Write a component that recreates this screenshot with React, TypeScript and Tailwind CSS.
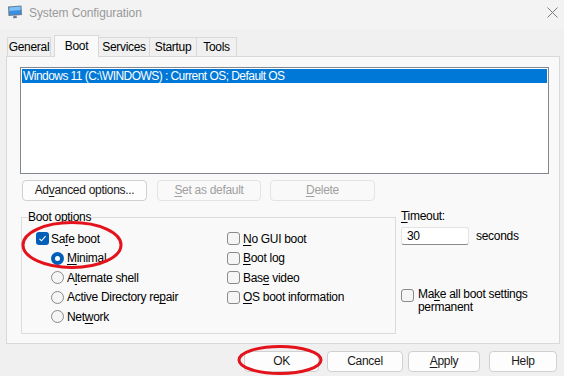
import React from "react";

const U = ({ children }: { children: React.ReactNode }) => (
  <span className="underline decoration-1 underline-offset-[2px]">{children}</span>
);

const Check = ({ checked = false }: { checked?: boolean }) =>
  checked ? (
    <span className="w-[13px] h-[13px] shrink-0 rounded-[3px] bg-[#005fb8] flex items-center justify-center">
      <svg width="9" height="9" viewBox="0 0 9 9">
        <path d="M1.5 4.8 L3.5 6.8 L7.6 2.2" fill="none" stroke="#fff" strokeWidth="1.1" />
      </svg>
    </span>
  ) : (
    <span className="block w-[13px] h-[13px] shrink-0 rounded-[3px] border border-[#8a8a8a] bg-[#f5f5f5]" />
  );

const Radio = ({ checked = false }: { checked?: boolean }) =>
  checked ? (
    <span className="w-[13px] h-[13px] shrink-0 rounded-full bg-[#005fb8] flex items-center justify-center">
      <span className="w-[5px] h-[5px] rounded-full bg-white" />
    </span>
  ) : (
    <span className="block w-[13px] h-[13px] shrink-0 rounded-full border border-[#8a8a8a] bg-[#f5f5f5]" />
  );

const Btn = ({
  w,
  disabled = false,
  children,
}: {
  w: string;
  disabled?: boolean;
  children: React.ReactNode;
}) => (
  <div
    className={
      disabled
        ? `${w} h-[21px] shrink-0 rounded-[4px] border border-[#e3e3e3] bg-[#f9f9f9] text-[#a0a0a0] flex items-center justify-center leading-[15px]`
        : `${w} h-[21px] shrink-0 rounded-[4px] border border-[#d0d0d0] bg-[#fdfdfd] text-[#1a1a1a] flex items-center justify-center leading-[15px]`
    }
  >
    {children}
  </div>
);

export default function App() {
  return (
    <div className="relative w-[564px] h-[376px] overflow-hidden bg-[#f0f0f0] text-[12px] tracking-[-0.3px] text-black font-[family-name:'Segoe_UI','Liberation_Sans',Arial,sans-serif]">
      {/* Title bar */}
      <div className="h-[29px] bg-[#f3f3f3] flex items-start">
        <svg className="ml-[7px] mt-[5px]" width="16" height="14" viewBox="0 0 16 14">
          <path d="M1 1.5 L14.5 0.5 L15 10 L1.5 11 Z" fill="#6b7a90" />
          <path d="M2.2 2.4 L13.5 1.6 L13.9 9.1 L2.6 9.9 Z" fill="#3b8fe0" />
          <path d="M2.2 2.4 L13.5 1.6 L13.7 5 L2.4 6 Z" fill="#7cc0f5" />
          <path d="M6.5 11 L9.5 10.8 L10 13 L6 13.3 Z" fill="#6b7a90" />
        </svg>
        <div className="ml-[6px] mt-[6px] leading-[15px] tracking-[-0.1px] text-[#9a9a9a]">System Configuration</div>
        <svg className="ml-auto mr-[6px] mt-[7px]" width="11" height="11" viewBox="0 0 11 11">
          <path d="M0.5 0.5 L10.5 10.5 M10.5 0.5 L0.5 10.5" stroke="#7a7a7a" strokeWidth="1" />
        </svg>
      </div>

      {/* Tabs */}
      <div className="mt-[6px] pl-[7px] h-[21px] flex items-end">
        <div className="w-[44px] h-[19px] border border-b-0 border-[#d9d9d9] bg-[#f0f0f0] flex items-center justify-center leading-[15px]">
          General
        </div>
        <div className="relative z-10 ml-[3px] w-[45px] h-[22px] -mb-px border border-b-0 border-[#d9d9d9] bg-[#f9f9f9] flex items-start justify-center pt-[3px] leading-[15px]">
          Boot
        </div>
        <div className="w-[51px] h-[19px] border-t border-r border-[#d9d9d9] bg-[#f0f0f0] flex items-center justify-center leading-[15px]">
          Services
        </div>
        <div className="w-[47px] h-[19px] border-t border-r border-[#d9d9d9] bg-[#f0f0f0] flex items-center justify-center leading-[15px]">
          Startup
        </div>
        <div className="w-[40px] h-[19px] border-t border-r border-[#d9d9d9] bg-[#f0f0f0] flex items-center justify-center leading-[15px]">
          Tools
        </div>
      </div>

      {/* Panel */}
      <div className="ml-[6px] w-[554px] h-[288px] border border-[#d9d9d9] bg-[#f9f9f9] pl-[13px] pt-[10px]">
        <div className="w-[529px] h-[107px] border border-[#828790] bg-white p-px">
          <div className="h-[14px] bg-[#0078d7] text-white pl-[1px] leading-[14px] tracking-[-0.55px]">
            Windows 11 (C:\WINDOWS) : Current OS; Default OS
          </div>
        </div>

        <div className="mt-[6px] ml-[2px] flex">
          <Btn w="w-[125px]">
            Ad<U>v</U>anced options...
          </Btn>
          <div className="ml-[10px]">
            <Btn w="w-[104px]" disabled>
              <U>S</U>et as default
            </Btn>
          </div>
          <div className="ml-[9px]">
            <Btn w="w-[105px]" disabled>
              <U>D</U>elete
            </Btn>
          </div>
        </div>

        <div className="mt-[8px] flex items-start">
          {/* Boot options group */}
          <div className="relative ml-[1px] mt-[8px] w-[375px] h-[117px] border border-[#dcdcdc] pt-[11px]">
            <div className="absolute -top-[8px] left-[6px] bg-[#f9f9f9] leading-[15px]">Boot options</div>
            <div className="grid grid-cols-[205px_1fr]">
              <div className="pl-[14px]">
                <div className="h-[19.5px] flex items-center gap-[2px]">
                  <Check checked />
                  <span>
                    Sa<U>f</U>e boot
                  </span>
                </div>
                <div className="pl-[15px]">
                  <div className="h-[19.5px] flex items-center gap-[3px]">
                    <Radio checked />
                    <span>
                      <U>M</U>inimal
                    </span>
                  </div>
                  <div className="h-[19.5px] flex items-center gap-[3px]">
                    <Radio />
                    <span>
                      A<U>l</U>ternate shell
                    </span>
                  </div>
                  <div className="h-[19.5px] flex items-center gap-[3px]">
                    <Radio />
                    <span>
                      Active Directory re<U>p</U>air
                    </span>
                  </div>
                  <div className="h-[19.5px] flex items-center gap-[3px]">
                    <Radio />
                    <span>
                      Net<U>w</U>ork
                    </span>
                  </div>
                </div>
              </div>
              <div>
                <div className="h-[19.5px] flex items-center gap-[3px]">
                  <Check />
                  <span>
                    <U>N</U>o GUI boot
                  </span>
                </div>
                <div className="h-[19.5px] flex items-center gap-[3px]">
                  <Check />
                  <span>
                    <U>B</U>oot log
                  </span>
                </div>
                <div className="h-[19.5px] flex items-center gap-[3px]">
                  <Check />
                  <span>
                    Bas<U>e</U> video
                  </span>
                </div>
                <div className="h-[19.5px] flex items-center gap-[3px]">
                  <Check />
                  <span>
                    <U>O</U>S boot information
                  </span>
                </div>
              </div>
            </div>
          </div>

          {/* Timeout column */}
          <div className="ml-[5px] flex flex-col">
            <div className="leading-[15px]">
              <U>T</U>imeout:
            </div>
            <div className="mt-[3px] flex items-center">
              <div className="w-[68px] h-[18px] rounded-[3px] border border-[#e3e3e3] border-b-[#8a8a8a] bg-white pl-[5px] leading-[16px]">
                30
              </div>
              <span className="ml-[7px]">seconds</span>
            </div>
            <div className="mt-[43px] flex items-start gap-[4px]">
              <div className="mt-[1px] shrink-0">
                <Check />
              </div>
              <div className="w-[140px] leading-[13px]">
                Ma<U>k</U>e all boot settings permanent
              </div>
            </div>
          </div>
        </div>
      </div>

      {/* Bottom buttons */}
      <div className="mt-[7px] pl-[244px] flex">
        <Btn w="w-[75px]">OK</Btn>
        <div className="ml-[8px]">
          <Btn w="w-[76px]">Cancel</Btn>
        </div>
        <div className="ml-[5px]">
          <Btn w="w-[72px]">
            <U>A</U>pply
          </Btn>
        </div>
        <div className="ml-[9px]">
          <Btn w="w-[68px]">Help</Btn>
        </div>
      </div>

      {/* Red annotation ellipses */}
      <svg className="absolute left-0 top-0 pointer-events-none" width="564" height="376" viewBox="0 0 564 376">
        <ellipse cx="72" cy="245" rx="49" ry="22.5" fill="none" stroke="#e3121b" strokeWidth="3" />
        <ellipse cx="280" cy="360" rx="41" ry="13.5" fill="none" stroke="#e3121b" strokeWidth="3" />
      </svg>
    </div>
  );
}
